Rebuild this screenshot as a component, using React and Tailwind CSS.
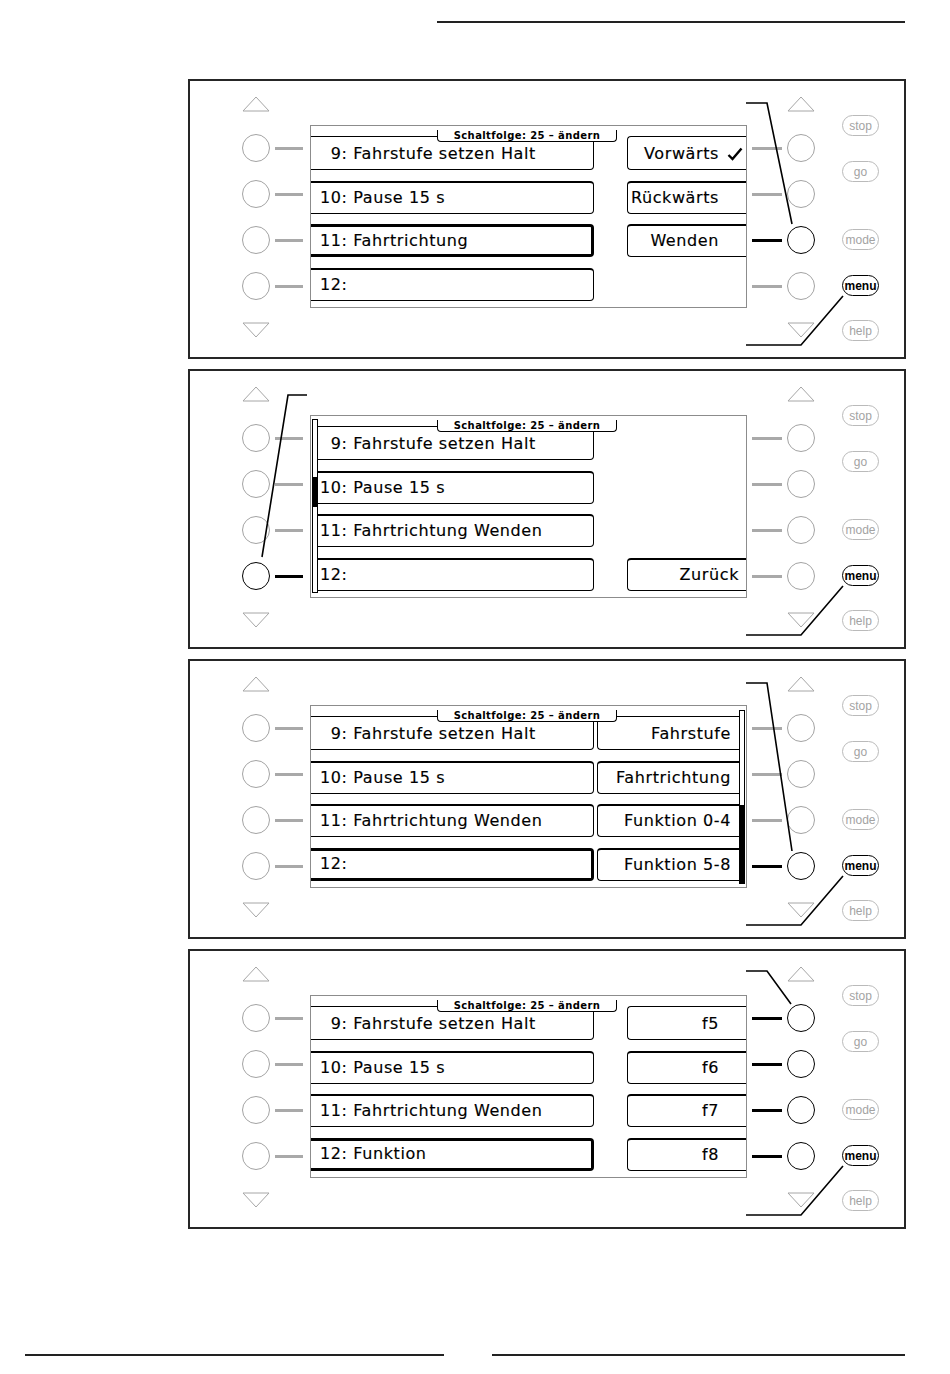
const LCD = "font-['DejaVu_Sans',sans-serif]"

const MENU_LINE = '655,217 613,266 558,266'

const panels = [
  {
    left: ['\u20079: Fahrstufe setzen Halt', '10: Pause 15 s', '11: Fahrtrichtung', '12:'],
    sel: 2,
    right: [{ t: 'Vorwärts', check: true }, { t: 'Rückwärts' }, { t: 'Wenden' }, null],
    leftOn: [],
    rightOn: [2],
    callout: '558,24 579,24 604,145',
  },
  {
    left: ['\u20079: Fahrstufe setzen Halt', '10: Pause 15 s', '11: Fahrtrichtung Wenden', '12:'],
    sel: -1,
    leftBar: true,
    right: [null, null, null, { t: 'Zurück', pr: 'pr-[7px]' }],
    leftOn: [3],
    rightOn: [],
    callout: '119,26 100,26 74,188',
  },
  {
    left: ['\u20079: Fahrstufe setzen Halt', '10: Pause 15 s', '11: Fahrtrichtung Wenden', '12:'],
    sel: 3,
    wide: true,
    right: [{ t: 'Fahrstufe' }, { t: 'Fahrtrichtung' }, { t: 'Funktion 0-4' }, { t: 'Funktion 5-8' }],
    leftOn: [],
    rightOn: [3],
    callout: '558,24 579,24 604,192',
  },
  {
    left: ['\u20079: Fahrstufe setzen Halt', '10: Pause 15 s', '11: Fahrtrichtung Wenden', '12: Funktion'],
    sel: 3,
    right: [{ t: 'f5' }, { t: 'f6' }, { t: 'f7' }, { t: 'f8' }],
    leftOn: [],
    rightOn: [0, 1, 2, 3],
    callout: '558,22 579,22 603,55',
  },
]

const Triangle = ({ down }) => (
  <svg width="28" height="16" viewBox="0 0 28 16" className="block">
    <polygon
      points={down ? '1,1 14,15 27,1' : '1,15 14,1 27,15'}
      fill="none"
      stroke="#a6a6a6"
      strokeWidth="1"
    />
  </svg>
)

const Knob = ({ on }) => (
  <div
    className={`h-[28px] w-[28px] shrink-0 rounded-full ${
      on ? 'border-[1.5px] border-black' : 'border border-[#a3a3a3]'
    }`}
  />
)

const Lead = ({ on, w }) => (
  <div className={`h-[3px] shrink-0 ${w} ${on ? 'bg-black' : 'bg-[#a9a9a9]'}`} />
)

const Pill = ({ label, strong }) => (
  <div
    className={`flex h-[21px] w-[37px] items-center justify-center rounded-full font-['Liberation_Sans',Arial,sans-serif] text-[12px] leading-none ${
      strong ? 'border-[1.5px] border-black font-bold text-black' : 'border border-[#bababa] text-[#a3a3a3]'
    }`}
  >
    {label}
  </div>
)

const Check = () => (
  <svg width="16" height="14" viewBox="0 0 16 14" className="ml-[8px] shrink-0">
    <path d="M1.5 8 L5.5 12 L14.5 1.5" fill="none" stroke="#000" strokeWidth="2.4" />
  </svg>
)

const Scroll = ({ thumb }) => (
  <div className="flex h-[174px] w-[6px] flex-col border border-black bg-white">
    <div className={`bg-black ${thumb}`} />
  </div>
)

const LeftBox = ({ text, first, sel, pad }) => {
  const border = sel
    ? 'border-y-[3px] border-r-[3px]'
    : `border-b border-r ${first ? 'border-t' : 'border-t-2'}`
  return (
    <div className={`flex items-center rounded-r-[4px] border-black ${first ? 'h-[34px] pt-[2px]' : 'h-[33px]'} ${border} ${pad}`}>
      <span className="whitespace-pre">{text}</span>
    </div>
  )
}

const RightBox = ({ cell, first, pr }) => {
  if (!cell) return <div className={first ? 'h-[34px]' : 'h-[33px]'} />
  return (
    <div
      className={`flex items-center justify-end rounded-l-[4px] border-b border-l border-black ${
        first ? 'h-[34px] border-t pt-[2px]' : 'h-[33px] border-t-2'
      } ${cell.check ? 'pr-[3px]' : cell.pr || pr}`}
    >
      <span className="whitespace-pre">{cell.t}</span>
      {cell.check && <Check />}
    </div>
  )
}

const Screen = ({ p }) => (
  <div
    className={`relative mt-[44px] flex h-[183px] w-[437px] shrink-0 border border-[#8c8c8c] bg-white ${LCD} text-[16px] leading-none tracking-[0.6px] text-black [-webkit-text-stroke:0.15px_black]`}
  >
    {p.leftBar && (
      <div className="ml-[1px] mt-[3px]">
        <Scroll thumb="mt-[57px] h-[30px]" />
      </div>
    )}
    <div className={`flex flex-col gap-[10.5px] pt-[10px] ${p.leftBar ? 'w-[276px]' : 'w-[283px]'}`}>
      {p.left.map((t, i) => (
        <LeftBox key={i} text={t} first={i === 0} sel={p.sel === i} pad={p.leftBar ? 'pl-[2px]' : 'pl-[9px]'} />
      ))}
    </div>
    {p.wide ? (
      <>
        <div className="ml-[3px] flex w-[142px] flex-col gap-[10.5px] pt-[10px]">
          {p.right.map((c, i) => (
            <RightBox key={i} cell={c} first={i === 0} pr="pr-[8px]" />
          ))}
        </div>
        <div className="mt-[4px]">
          <Scroll thumb="mt-auto h-[78px]" />
        </div>
      </>
    ) : (
      <div className="ml-auto flex w-[119px] flex-col gap-[10.5px] pt-[10px]">
        {p.right.map((c, i) => (
          <RightBox key={i} cell={c} first={i === 0} pr="pr-[27px]" />
        ))}
      </div>
    )}
    <div className="absolute left-[126px] top-[4px] flex h-[12px] w-[180px] items-center justify-center rounded-b-[4px] border-x border-b border-black bg-white text-[10px] font-bold tracking-[0.4px] [-webkit-text-stroke:0px]">
      Schaltfolge: 25 – ändern
    </div>
  </div>
)

const Panel = ({ p }) => (
  <div className="relative flex h-[280px] w-[718px] items-start border-2 border-[#262626] bg-white">
    {/* left keys */}
    <div className="flex w-[120px] shrink-0 flex-col pl-[52px] pt-[15px]">
      <Triangle />
      <div className="mt-[22px] flex flex-col gap-[18px]">
        {[0, 1, 2, 3].map((i) => (
          <div key={i} className="flex items-center gap-[5px]">
            <Knob on={p.leftOn.includes(i)} />
            <Lead on={p.leftOn.includes(i)} w="w-[28px]" />
          </div>
        ))}
      </div>
      <div className="mt-[22px]">
        <Triangle down />
      </div>
    </div>

    <Screen p={p} />

    {/* right keys */}
    <div className="ml-[5px] flex shrink-0 flex-col pt-[15px]">
      <div className="ml-[35px]">
        <Triangle />
      </div>
      <div className="mt-[22px] flex flex-col gap-[18px]">
        {[0, 1, 2, 3].map((i) => (
          <div key={i} className="flex items-center gap-[5px]">
            <Lead on={p.rightOn.includes(i)} w="w-[30px]" />
            <Knob on={p.rightOn.includes(i)} />
          </div>
        ))}
      </div>
      <div className="ml-[35px] mt-[22px]">
        <Triangle down />
      </div>
    </div>

    {/* function keys */}
    <div className="ml-[27px] flex shrink-0 flex-col">
      <div className="mt-[34px]"><Pill label="stop" /></div>
      <div className="mt-[25px]"><Pill label="go" /></div>
      <div className="mt-[47px]"><Pill label="mode" /></div>
      <div className="mt-[25px]"><Pill label="menu" strong /></div>
      <div className="mt-[24px]"><Pill label="help" /></div>
    </div>

    <svg
      width="718"
      height="280"
      viewBox="0 0 718 280"
      className="pointer-events-none absolute -left-[2px] -top-[2px]"
    >
      <polyline points={p.callout} fill="none" stroke="#000" strokeWidth="1.6" />
      <polyline points={MENU_LINE} fill="none" stroke="#000" strokeWidth="1.6" />
    </svg>
  </div>
)

export default function App() {
  return (
    <div className="h-[1374px] w-[950px] overflow-hidden bg-white pt-[21px]">
      <div className="ml-[437px] h-[2px] w-[468px] bg-[#222]" />
      <div className="ml-[188px] mt-[56px] flex flex-col gap-[10px]">
        {panels.map((p, i) => (
          <Panel key={i} p={p} />
        ))}
      </div>
      <div className="mt-[125px] flex">
        <div className="ml-[25px] h-[2px] w-[419px] bg-[#222]" />
        <div className="ml-[48px] h-[2px] w-[413px] bg-[#222]" />
      </div>
    </div>
  )
}
